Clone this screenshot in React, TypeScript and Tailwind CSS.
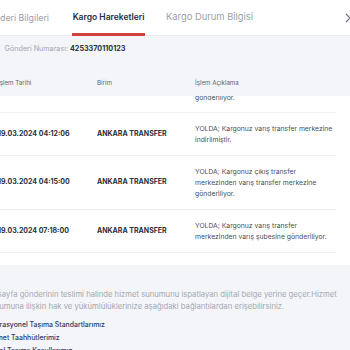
import React from "react";

const rows = [
  {
    date: "19.03.2024 04:12:06",
    unit: "ANKARA TRANSFER",
    desc: "YOLDA; Kargonuz varış transfer merkezine indirilmiştir.",
  },
  {
    date: "19.03.2024 04:15:00",
    unit: "ANKARA TRANSFER",
    desc: "YOLDA; Kargonuz çıkış transfer merkezinden varış transfer merkezine gönderiliyor.",
  },
  {
    date: "19.03.2024 07:18:00",
    unit: "ANKARA TRANSFER",
    desc: "YOLDA; Kargonuz varış transfer merkezinden varış şubesine gönderiliyor.",
  },
];

export default function App() {
  return (
    <div
      className="w-[350px] h-[350px] overflow-hidden bg-white"
      style={{ fontFamily: "Inter, 'Noto Sans', sans-serif" }}
    >
      <div className="w-[390px] -ml-[30px] flex flex-col">
        {/* Tabs header */}
        <div className="h-[36px] flex items-stretch border-b border-[#e8ebef]">
          <div className="w-[79px] flex items-center justify-end text-[8.8px] text-[#9aa0ab] whitespace-nowrap">
            Gönderi Bilgileri
          </div>
          <div className="ml-[23px] w-[73px] relative flex items-center justify-center text-[8.5px] font-semibold text-[#272c38] whitespace-nowrap">
            Kargo Hareketleri
            <div className="absolute left-0 right-0 bottom-[-1px] h-[3px] bg-[#d0413f]" />
          </div>
          <div className="ml-[21px] flex items-center text-[9.4px] text-[#9aa0ab] whitespace-nowrap">
            Kargo Durum Bilgisi
          </div>
          <div className="ml-auto mr-[5px] w-[10px] flex items-center">
            <svg width="10" height="10" viewBox="0 0 10 10" fill="none" stroke="#6b7280" strokeWidth="1.2">
              <path d="M1 1 L9 9 M9 1 L1 9" />
            </svg>
          </div>
        </div>

        {/* Gray section: number + table header */}
        <div className="bg-[#f3f5f9] pt-[7px]">
          <div className="flex items-center h-[12px] text-[7.2px] whitespace-nowrap">
            <span className="w-[98px] text-right text-[#a0a6b0]">Gönderi Numarası:</span>
            <span className="ml-[2px] font-bold text-[#2a2f3b]">4253370110123</span>
          </div>
          <div className="mt-[15px] h-[26px] grid grid-cols-[99px_98px_141px] pl-[28px] items-center text-[6.2px] text-[#5f6672]">
            <span>İşlem Tarihi</span>
            <span>Birim</span>
            <span>İşlem Açıklama</span>
          </div>
        </div>

        {/* Table body */}
        <div className="bg-white pr-[24px] pb-[12px]">
          {/* partially scrolled first row */}
          <div className="h-[17px] overflow-hidden grid grid-cols-[99px_98px_141px] pl-[28px] border-b border-[#eef0f3]">
            <span />
            <span />
            <span className="-mt-[4px] text-[6.8px] leading-[11px] text-[#4a505b]">gönderiliyor.</span>
          </div>
          {rows.map((r, i) => (
            <div
              key={i}
              className="grid grid-cols-[99px_98px_141px] pl-[28px] py-[10px] border-b border-[#eef0f3] items-center"
            >
              <span className="text-[7px] font-bold text-[#2b303b] whitespace-nowrap">{r.date}</span>
              <span className="text-[7px] font-bold text-[#2b303b] whitespace-nowrap">{r.unit}</span>
              <span className="text-[6.8px] leading-[11px] text-[#4a505b]">{r.desc}</span>
            </div>
          ))}
        </div>

        {/* Footer */}
        <div className="bg-[#f3f5f9] pt-[24px] pl-[16px] h-[200px]">
          <div className="text-[7.7px] leading-[12px] text-[#a3a9b3] whitespace-nowrap">
            <div>Bu sayfa gönderinin teslimi halinde hizmet sunumunu ispatlayan dijital belge yerine geçer.Hizmet</div>
            <div>sunumuna ilişkin hak ve yükümlülüklerinize aşağıdaki bağlantılardan erişebilirsiniz.</div>
          </div>
          <div className="mt-[5px] flex flex-col text-[6.9px] leading-[13px] font-medium text-[#2f3a66] whitespace-nowrap">
            <span>Operasyonel Taşıma Standartlarımız</span>
            <span>Hizmet Taahhütlerimiz</span>
            <span>Genel Taşıma Koşullarımız</span>
          </div>
        </div>
      </div>
    </div>
  );
}
